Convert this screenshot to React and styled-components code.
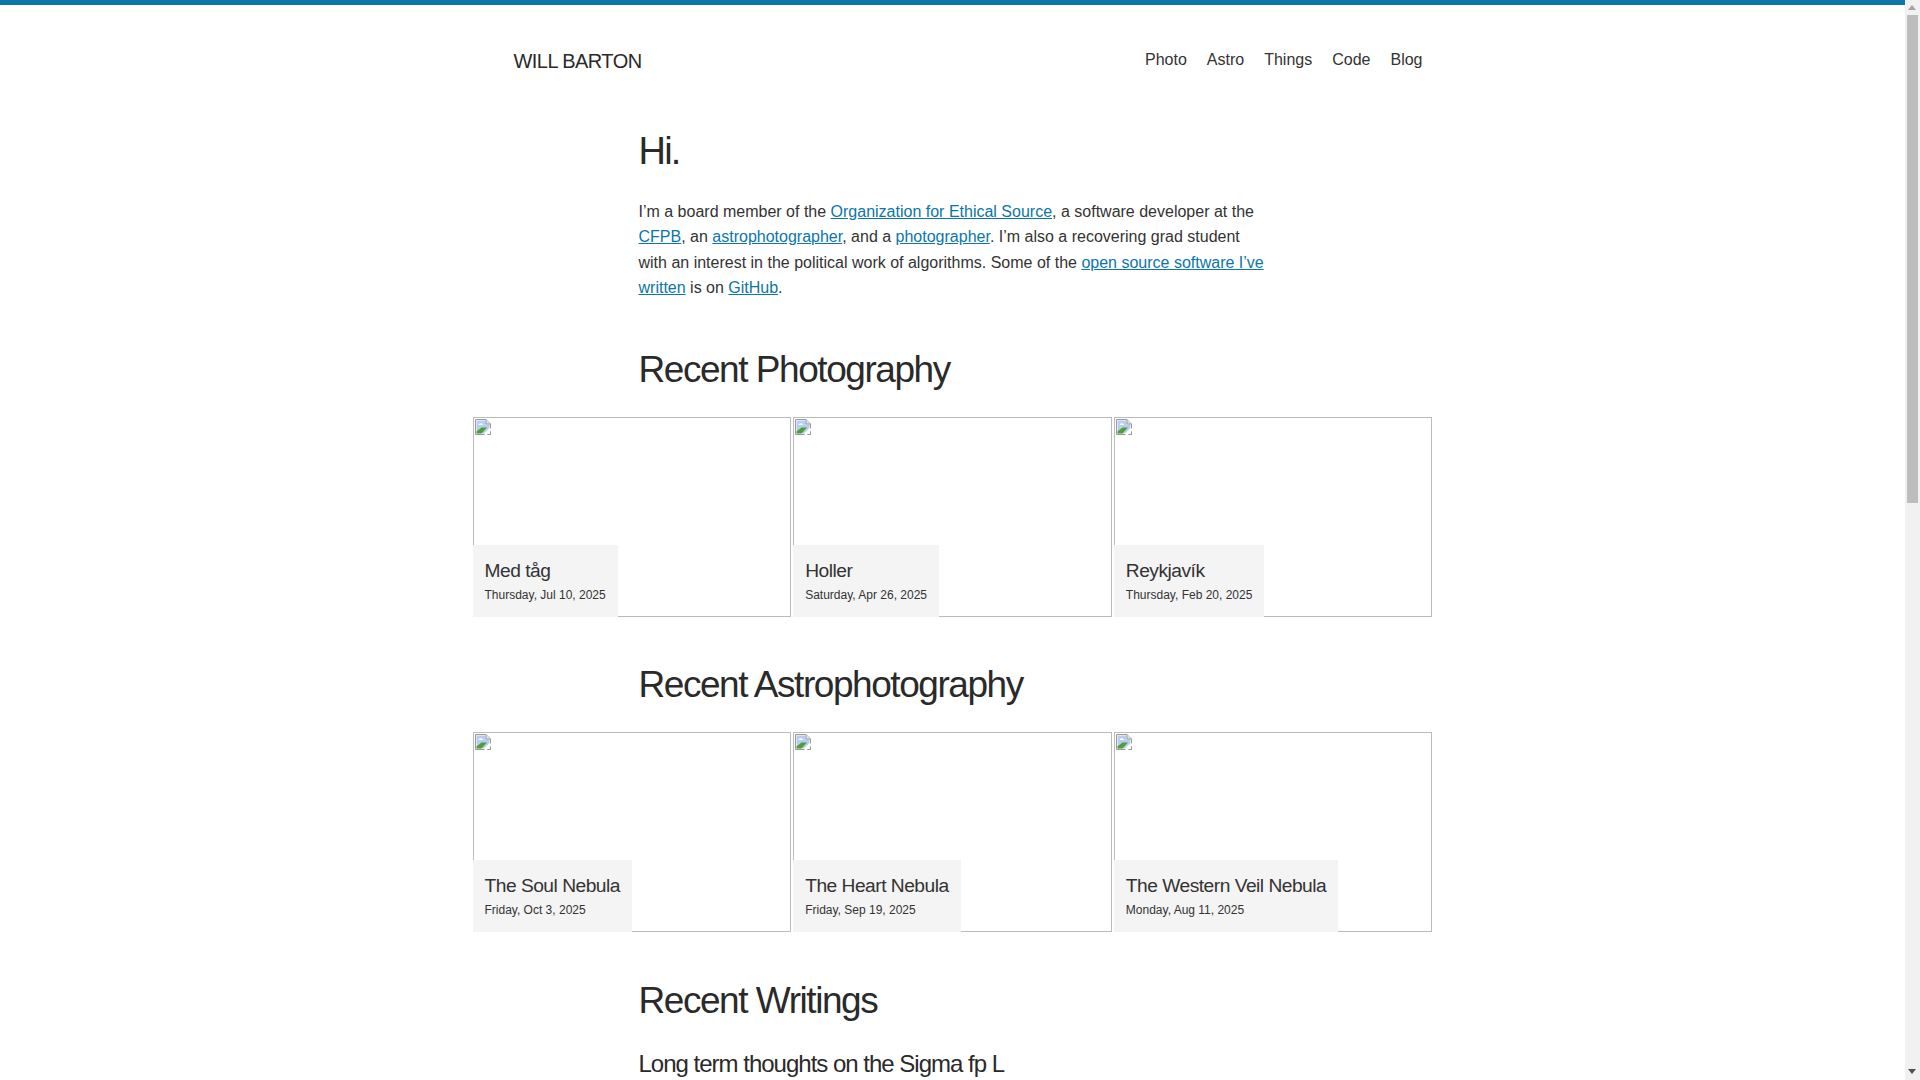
import React from 'react';
import styled, { createGlobalStyle } from 'styled-components'

const Global = createGlobalStyle`
  html::-webkit-scrollbar {
    display: none;
  }
  body {
    margin: 0;
    background: #fff;
    color: #333;
    font-family: "Liberation Sans", Arial, sans-serif;
    font-size: 16px;
    line-height: 25.6px;
  }
`

const Page = styled.div`
  margin-right: 15px;
  border-top: 5px solid #0b76a8;
  min-height: 2200px;
`

// the browser's own scrollbar does not show in the picture, so it is drawn over the page
const ScrollTrack = styled.div`
  position: fixed;
  top: 0;
  right: 0;
  bottom: 0;
  width: 15px;
  background: #f1f1f1;
`

const ScrollThumb = styled.div`
  position: absolute;
  top: 15px;
  left: 2px;
  width: 11px;
  height: 488px;
  background: #bdbdbd;
`

const Arrow = styled.div`
  position: absolute;
  left: 3px;
  ${p => p.$down ? 'bottom: 6px;' : 'top: 5px;'}
  width: 0;
  height: 0;
  border-left: 4.5px solid transparent;
  border-right: 4.5px solid transparent;
  ${p => p.$down ? 'border-top: 5px solid #505050;' : 'border-bottom: 5px solid #a3a3a3;'}
`

const Header = styled.header`
  width: 960px;
  margin: 0 auto;
  box-sizing: border-box;
  padding: 41px 10px 0 41px;
  height: 97px;
  display: flex;
  justify-content: space-between;
  align-items: flex-start;
`

const Brand = styled.a`
  color: #2a2a2a;
  font-size: 20px;
  line-height: 30px;
  letter-spacing: -0.55px;
`

const Nav = styled.nav`
  display: flex;
  gap: 20px;
  line-height: 25.6px;
  padding-top: 0.5px;
`

const NavItem = styled.a`
  color: #333;
`

const Prose = styled.section`
  width: 628px;
  margin: 0 auto;
`

const Title = styled.h1`
  color: #2a2a2a;
  font-size: 38px;
  font-weight: 400;
  letter-spacing: -1.8px;
  line-height: 48px;
  margin: 25px 0 23.6px;
`

const Para = styled.p`
  margin: 0;
`

const Link = styled.a`
  color: #0b76a8;
  text-decoration: underline;
`

const SectionTitle = styled.h2`
  color: #2a2a2a;
  font-size: 37px;
  font-weight: 400;
  letter-spacing: -1.45px;
  line-height: 48px;
  margin: ${p => p.$top}px 0 ${p => p.$bottom}px;
`

const PostTitle = styled.h3`
  color: #2a2a2a;
  font-size: 24px;
  font-weight: 400;
  letter-spacing: -1px;
  line-height: 32px;
  margin: 0;
`

const Grid = styled.div`
  width: 960px;
  margin: 0 auto;
  display: grid;
  grid-template-columns: repeat(3, 1fr);
  gap: 2px;
`

const Card = styled.a`
  height: 200px;
  box-sizing: border-box;
  border: 1px solid #bbb;
  position: relative;
  display: block;
`

const BrokenIcon = styled.svg`
  display: block;
  width: 16px;
  height: 16px;
  margin: 1px 0 0 1px;
`

const Label = styled.div`
  position: absolute;
  left: -1px;
  bottom: -1px;
  background: #f4f4f4;
  padding: 11px 12px 13px;
`

const CardTitle = styled.div`
  font-size: 19.2px;
  letter-spacing: -0.5px;
  line-height: 30px;
`

const CardDate = styled.div`
  font-size: 12px;
  line-height: 18px;
  margin-top: -0.5px;
`

const Broken = () =>
  <BrokenIcon viewBox="0 0 16 16">
    <path d="M0.5 0.5H11L15.5 5V15.5H0.5Z" fill="#fff" stroke="#9a9a9a" />
    <path d="M1.5 1.5H10.5V5.5H14.5V9L9 14.5H1.5Z" fill="#b7cdf4" />
    <path d="M3.5 6c.8-2.2 3.4-2.2 4.8 0z" fill="#fff" />
    <path d="M1.5 14.5V12.5L6.5 8.5H12L6.5 14.5Z" fill="#4f9f32" />
    <path d="M10 16L16 10" stroke="#fff" strokeWidth="2.5" />
    <path d="M11 .5V5H15.5" fill="#e4e4e4" stroke="#9a9a9a" />
    <path d="M13 15.5H15.5V13" fill="none" stroke="#9a9a9a" />
  </BrokenIcon>

const Tile = ({ title, date }) =>
  <Card>
    <Broken />
    <Label>
      <CardTitle>{title}</CardTitle>
      <CardDate>{date}</CardDate>
    </Label>
  </Card>

const photos = [
  ['Med tåg', 'Thursday, Jul 10, 2025'],
  ['Holler', 'Saturday, Apr 26, 2025'],
  ['Reykjavík', 'Thursday, Feb 20, 2025'],
]

const astro = [
  ['The Soul Nebula', 'Friday, Oct 3, 2025'],
  ['The Heart Nebula', 'Friday, Sep 19, 2025'],
  ['The Western Veil Nebula', 'Monday, Aug 11, 2025'],
]

export default () =>
  <Page>
    <Global />
    <Header>
      <Brand>WILL BARTON</Brand>
      <Nav>
        <NavItem>Photo</NavItem>
        <NavItem>Astro</NavItem>
        <NavItem>Things</NavItem>
        <NavItem>Code</NavItem>
        <NavItem>Blog</NavItem>
      </Nav>
    </Header>

    <Prose>
      <Title>Hi.</Title>
      <Para>
        I’m a board member of the <Link>Organization for Ethical Source</Link>, a software developer at the{' '}
        <Link>CFPB</Link>, an <Link>astrophotographer</Link>, and a <Link>photographer</Link>. I’m also a recovering grad student
        with an interest in the political work of algorithms. Some of the <Link>open source software I’ve written</Link> is on <Link>GitHub</Link>.
      </Para>
      <SectionTitle $top={45.4} $bottom={22.6}>Recent Photography</SectionTitle>
    </Prose>
    <Grid>
      {photos.map(([t, d]) => <Tile key={t} title={t} date={d} />)}
    </Grid>

    <Prose>
      <SectionTitle $top={44} $bottom={23}>Recent Astrophotography</SectionTitle>
    </Prose>
    <Grid>
      {astro.map(([t, d]) => <Tile key={t} title={t} date={d} />)}
    </Grid>

    <Prose>
      <SectionTitle $top={45.3} $bottom={22.7}>Recent Writings</SectionTitle>
      <PostTitle>Long term thoughts on the Sigma fp L</PostTitle>
    </Prose>

    <ScrollTrack>
      <Arrow />
      <ScrollThumb />
      <Arrow $down />
    </ScrollTrack>
  </Page>
